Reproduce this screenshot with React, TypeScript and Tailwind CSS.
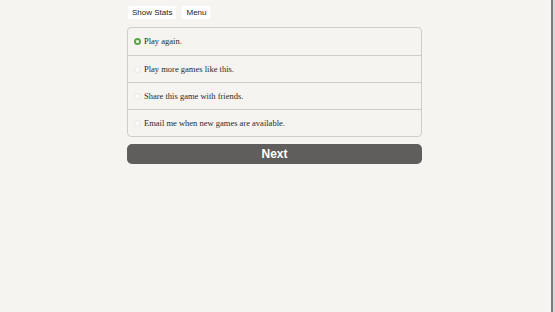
import React from "react";

const options = [
  "Play again.",
  "Play more games like this.",
  "Share this game with friends.",
  "Email me when new games are available.",
];

export default function App() {
  return (
    <div className="flex h-[312px] w-[555px] bg-[#f5f4f0]">
      <div className="flex-1">
        <div className="ml-[127px] w-[295px] pt-[6px]">
          <div className="flex gap-[6px] pl-[1px]">
            <button className="h-[13px] rounded-[2px] bg-white px-[4px] text-[8px] leading-[13px] text-[#222] [font-family:'Liberation_Sans',Arial,sans-serif]">
              Show Stats
            </button>
            <button className="h-[13px] rounded-[2px] bg-white px-[4px] text-[8px] leading-[13px] text-[#222] [font-family:'Liberation_Sans',Arial,sans-serif]">
              Menu
            </button>
          </div>
          <div className="mt-[8px] rounded-[4px] border border-[#cfcdc9] bg-[#f5f4f0]">
            {options.map((o, i) => (
              <div
                key={o}
                className={`flex h-[27px] items-center pl-[6px] ${i > 0 ? "border-t border-[#cfcdc9]" : ""}`}
              >
                {i === 0 ? (
                  <span className="flex h-[7px] w-[7px] items-center justify-center rounded-full bg-[#5aa544]">
                    <span className="h-[3px] w-[3px] rounded-full bg-white" />
                  </span>
                ) : (
                  <span className="h-[7px] w-[7px] rounded-full border border-[#e8e7e3] bg-[#fafaf8]" />
                )}
                <span className="ml-[3px] text-[8.5px] text-[#2a2a2a] [font-family:'Liberation_Serif','Times_New_Roman',serif]">
                  {o}
                </span>
              </div>
            ))}
          </div>
          <button className="mt-[7px] flex h-[20px] w-full items-center justify-center rounded-[5px] bg-[#5f5e5c] text-[12px] font-bold text-white [font-family:'Liberation_Sans',Arial,sans-serif]">
            Next
          </button>
        </div>
      </div>
      <div className="w-[2px] bg-[#7a7a7a]" />
      <div className="w-[2px] bg-[#d8d8d8]" />
    </div>
  );
}
